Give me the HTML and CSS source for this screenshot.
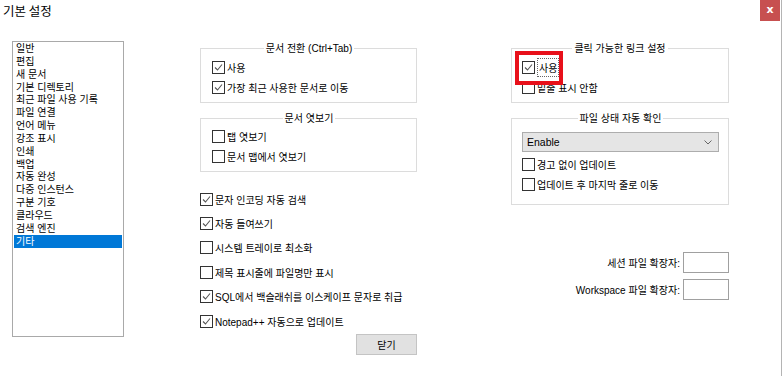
FILE: index.html
```html
<!DOCTYPE html>
<html>
  <head>
    <meta charset="utf-8">
    <title>기본 설정</title>
    <link rel="stylesheet" href="styles.css">
  </head>
<body>
<div class="window">
  <div class="titlebar">
    <span class="title">기본 설정</span>
    <span class="close">x</span>
  </div>

  <div class="main">
    <ul class="catlist">
      <li>일반</li>
      <li>편집</li>
      <li>새 문서</li>
      <li>기본 디렉토리</li>
      <li>최근 파일 사용 기록</li>
      <li>파일 연결</li>
      <li>언어 메뉴</li>
      <li>강조 표시</li>
      <li>인쇄</li>
      <li>백업</li>
      <li>자동 완성</li>
      <li>다중 인스턴스</li>
      <li>구분 기호</li>
      <li>클라우드</li>
      <li>검색 엔진</li>
      <li class="sel">기타</li>
    </ul>

    <div class="col col-mid">
      <fieldset class="group g-switch">
        <legend>문서 전환 (Ctrl+Tab)</legend>
        <label class="check"><span class="box on"><svg viewBox="0 0 11 11"><polyline points="2,5.5 4.5,8 9,2.5"/></svg></span>사용</label>
        <label class="check"><span class="box on"><svg viewBox="0 0 11 11"><polyline points="2,5.5 4.5,8 9,2.5"/></svg></span>가장 최근 사용한 문서로 이동</label>
      </fieldset>

      <fieldset class="group g-peek">
        <legend>문서 엿보기</legend>
        <label class="check"><span class="box"></span>탭 엿보기</label>
        <label class="check"><span class="box"></span>문서 맵에서 엿보기</label>
      </fieldset>

      <div class="options">
        <label class="check"><span class="box on"><svg viewBox="0 0 11 11"><polyline points="2,5.5 4.5,8 9,2.5"/></svg></span>문자 인코딩 자동 검색</label>
        <label class="check"><span class="box on"><svg viewBox="0 0 11 11"><polyline points="2,5.5 4.5,8 9,2.5"/></svg></span>자동 들여쓰기</label>
        <label class="check"><span class="box"></span>시스템 트레이로 최소화</label>
        <label class="check"><span class="box"></span>제목 표시줄에 파일명만 표시</label>
        <label class="check"><span class="box on"><svg viewBox="0 0 11 11"><polyline points="2,5.5 4.5,8 9,2.5"/></svg></span>SQL에서 백슬래쉬를 이스케이프 문자로 취급</label>
        <label class="check"><span class="box on"><svg viewBox="0 0 11 11"><polyline points="2,5.5 4.5,8 9,2.5"/></svg></span>Notepad++ 자동으로 업데이트</label>
      </div>

      <div class="actions">
        <button class="btn">닫기</button>
      </div>
    </div>

    <div class="col col-right">
      <fieldset class="group g-link">
        <legend>클릭 가능한 링크 설정</legend>
        <label class="check marked"><span class="box on"><svg viewBox="0 0 11 11"><polyline points="2,5.5 4.5,8 9,2.5"/></svg></span><span class="focus">사용</span><span class="hl"></span></label>
        <label class="check"><span class="box"></span>밑줄 표시 안함</label>
      </fieldset>

      <fieldset class="group g-status">
        <legend>파일 상태 자동 확인</legend>
        <div class="combo">
          <span>Enable</span>
          <svg class="chev" viewBox="0 0 8 5"><polyline points="0.5,0.5 4,4 7.5,0.5"/></svg>
        </div>
        <label class="check"><span class="box"></span>경고 없이 업데이트</label>
        <label class="check"><span class="box"></span>업데이트 후 마지막 줄로 이동</label>
      </fieldset>

      <div class="fields">
        <div class="field"><span>세션 파일 확장자:</span><span class="input"></span></div>
        <div class="field"><span>Workspace 파일 확장자:</span><span class="input"></span></div>
      </div>
    </div>
  </div>
</div>
</body>
</html>
```

FILE: styles.css
```css
body {
  margin: 0;
  background: #fff;
  color: #000;
  font-family: "Liberation Sans", "Noto Sans CJK KR", sans-serif;
  font-size: 10px;
}

.window {
  width: 781px;
  height: 376px;
  border-right: 1px solid #b4b4b4;
}

/* title bar */
.titlebar {
  display: flex;
  justify-content: space-between;
  height: 21px;
}

.title {
  font-family: "Noto Sans CJK KR", sans-serif;
  font-size: 12.5px;
  line-height: 16px;
  padding: 3px 0 0 3px;
}

.close {
  width: 20px;
  height: 21px;
  margin-right: 1px;
  background: #c75050;
  color: #fff;
  display: flex;
  align-items: center;
  justify-content: center;
  font: bold 11px "DejaVu Sans", sans-serif;
  padding-bottom: 2px;
  box-sizing: border-box;
}

/* body */
.main {
  display: flex;
  padding-left: 12px;
  margin-top: 20px;
}

.catlist {
  list-style: none;
  margin: 0;
  padding: 0 1px;
  width: 108px;
  height: 294px;
  border: 1px solid #a9a9a9;
}

.catlist li {
  box-sizing: border-box;
  height: 12.85px;
  padding: 2px 0 0 2px;
  line-height: 10.85px;
  white-space: nowrap;
}

.catlist li.sel {
  background: #0078d7;
  color: #fff;
}

.col {
  display: flex;
  flex-direction: column;
  padding-top: 1px;
}

.col-mid {
  width: 217px;
  margin-left: 76px;
}

.col-right {
  width: 218px;
  margin-left: 94px;
}

/* group boxes */
.group {
  margin: 0;
  min-width: 0;
  border: 1px solid #dcdcdc;
  padding: 2px 10px 5px 11px;
}

.group legend {
  margin: 0 auto;
  padding: 0 2px;
  line-height: 13px;
}

.g-peek {
  margin-top: 9px;
  padding-top: 1px;
}

.g-link {
  padding-left: 10px;
}

.g-status {
  margin-top: 9px;
  padding: 7px 9px 10px 10px;
}

/* check boxes */
.check {
  display: flex;
  align-items: center;
  gap: 2px;
  height: 20px;
  white-space: nowrap;
}

.box {
  flex: none;
  width: 13px;
  height: 13px;
  box-sizing: border-box;
  border: 1px solid #333;
  background: #fff;
}

.box svg {
  display: block;
  width: 11px;
  height: 11px;
  fill: none;
  stroke: #555;
  stroke-width: 1.1;
}

.options {
  margin-top: 15px;
}

.options .check {
  height: 24.4px;
}

.actions {
  display: flex;
  justify-content: flex-end;
  margin-top: 1px;
}

.btn {
  width: 61px;
  height: 21px;
  padding: 0;
  border: 1px solid #c4c4c4;
  background: #e1e1e1;
  font: inherit;
  color: #000;
}

/* the marked option */
.marked {
  position: relative;
}

.focus {
  outline: 1px dotted #666;
  outline-offset: 0;
  padding: 1px 1px;
  margin-left: 1px;
}

.hl {
  position: absolute;
  left: -7px;
  top: -6px;
  width: 48px;
  height: 34px;
  box-sizing: border-box;
  border: 4px solid #e8101a;
}

/* combo box */
.combo {
  display: flex;
  justify-content: space-between;
  align-items: center;
  height: 20px;
  box-sizing: border-box;
  margin-bottom: 2px;
  padding: 0 6px 0 4px;
  border: 1px solid #adadad;
  background: #e5e5e5;
  font-size: 10.5px;
}

.chev {
  width: 8px;
  height: 5px;
  fill: none;
  stroke: #666;
  stroke-width: 1;
}

/* extension fields */
.fields {
  margin-top: 47px;
}

.field {
  display: flex;
  justify-content: flex-end;
  align-items: center;
  gap: 3px;
}

.field + .field {
  margin-top: 6px;
}

.input {
  width: 46px;
  height: 21px;
  box-sizing: border-box;
  border: 1px solid #a0a0a0;
  background: #fff;
}
```
